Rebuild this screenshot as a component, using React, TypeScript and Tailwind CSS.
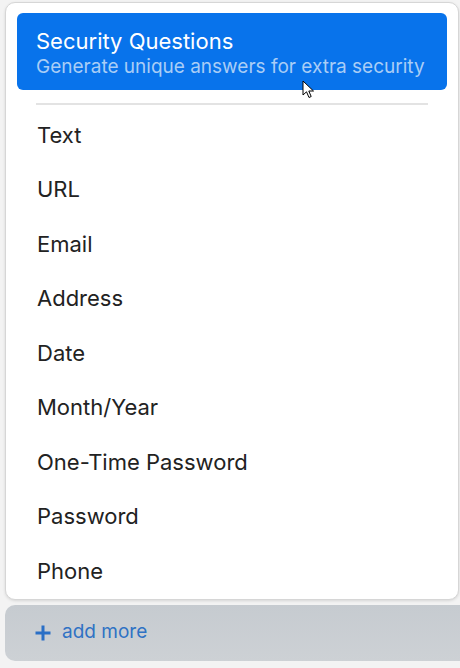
import React from "react";

const ITEMS = ["Text", "URL", "Email", "Address", "Date", "Month/Year", "One-Time Password", "Password", "Phone"];

function Cursor() {
  return (
    <svg width="14" height="20" viewBox="0 0 14 20" className="absolute left-[302px] top-[80px]">
      <path d="M1 1 L1 15 L4.5 11.8 L7 17.5 L9.2 16.5 L6.8 11 L11.5 11 Z" fill="#fff" stroke="#000" strokeWidth="1" strokeLinejoin="round" />
    </svg>
  );
}

export default function App() {
  return (
    <div className="relative h-[668px] w-[460px] overflow-hidden bg-[#f3f3f3] font-['Inter',sans-serif]">
      <div className="pl-[5px] pt-[2px]">
        {/* menu */}
        <div className="w-[454px] rounded-[10px] border border-[#d6d6d6] bg-white px-[11px] pt-[10px] shadow-[0_1px_3px_rgba(0,0,0,0.12)]">
          <div className="rounded-[6px] bg-[#0873eb] px-[19px] pt-[14px] pb-[11px]">
            <div className="text-[22px] leading-[28px] text-white">Security Questions</div>
            <div className="text-[19px] leading-[24px] text-[#a9cdf6]">Generate unique answers for extra security</div>
          </div>
          <div className="mx-[19px] mt-[13px] h-[2px] bg-[#e3e3e3]" />
          <ul className="pt-[3px]">
            {ITEMS.map((t) => (
              <li key={t} className="flex h-[54.5px] items-center px-[20px] text-[22px] text-[#222]">
                {t}
              </li>
            ))}
          </ul>
        </div>
        {/* add more */}
        <div className="mt-[5px] flex h-[56px] w-[470px] items-center gap-[11px] rounded-[10px] bg-gradient-to-b from-[#c6cbd0] to-[#cdd1d5] pl-[30px] text-[19px] text-[#2f72c4]">
          <svg width="16" height="16" viewBox="0 0 16 16">
            <path d="M8 0.5 V15.5 M0.5 8 H15.5" stroke="#2a6fc6" strokeWidth="3" />
          </svg>
          <span>add more</span>
        </div>
      </div>
      <Cursor />
    </div>
  );
}
